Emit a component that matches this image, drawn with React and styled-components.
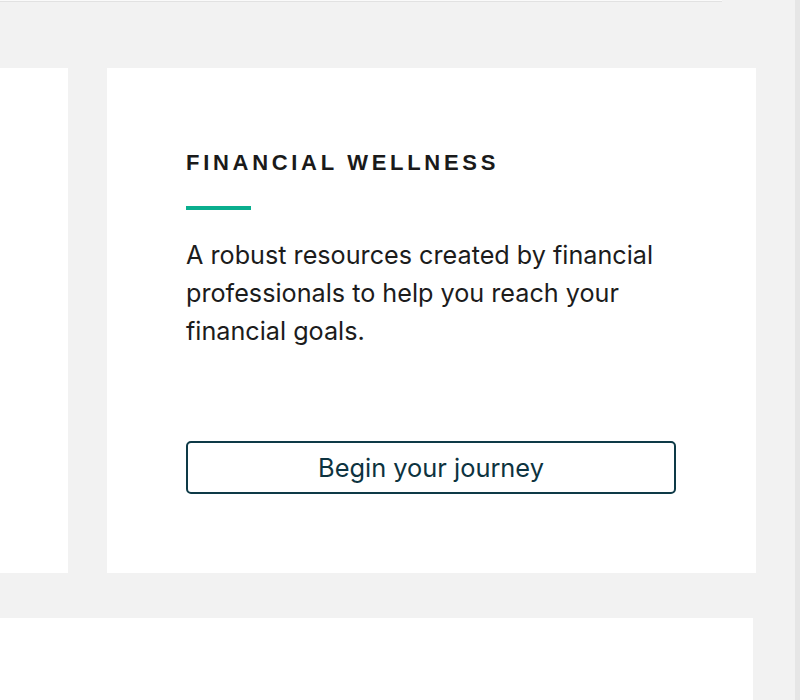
import React from "react";
import styled, { createGlobalStyle } from "styled-components";

const Global = createGlobalStyle`
  html, body { margin: 0; padding: 0; background: #f2f2f2; }
  body { font-family: "Inter", "Open Sans", sans-serif; }
  * { box-sizing: border-box; }
`;

const Page = styled.div`
  display: flex;
  width: 800px;
  height: 700px;
  overflow: hidden;
`;

const Main = styled.div`
  flex: 1;
  display: flex;
  flex-direction: column;
`;

const Track = styled.div`
  width: 5px;
  background: #e6e6e6;
`;

const PrevEdge = styled.div`
  width: 722px;
  height: 2px;
  background: #fafafa;
  border-bottom: 1px solid #e2e2e2;
`;

const Row = styled.div`
  display: flex;
  gap: 39px;
  margin-top: 66px;
  height: 505px;
`;

const Card = styled.div`
  background: #ffffff;
  width: ${(p) => p.$w}px;
  flex-shrink: 0;
`;

const FeatureCard = styled(Card)`
  padding: 83px 80px 0 79px;
  display: flex;
  flex-direction: column;
`;

const Title = styled.h2`
  margin: 0;
  font-family: "Liberation Sans", Arial, sans-serif;
  font-weight: 700;
  font-size: 22px;
  line-height: 24px;
  letter-spacing: 3.7px;
  color: #1a1a1a;
`;

const Accent = styled.div`
  width: 65px;
  height: 4px;
  background: #0aae8e;
  margin-top: 31px;
`;

const Body = styled.p`
  margin: 26px 0 0;
  font-size: 25.2px;
  line-height: 38px;
  color: #1c1c1c;
  font-weight: 400;
  letter-spacing: 0;
`;

const Button = styled.button`
  margin-top: 91px;
  height: 53px;
  width: 100%;
  background: #ffffff;
  border: 2px solid #0e3a47;
  border-radius: 5px;
  font-family: "Inter", "Open Sans", sans-serif;
  font-size: 25.4px;
  font-weight: 400;
  letter-spacing: 0;
  color: #0d3340;
  cursor: pointer;
`;

const BottomCard = styled(Card)`
  margin-top: 45px;
  height: 82px;
`;

export default function App() {
  return (
    <>
      <Global />
      <Page>
        <Main>
          <PrevEdge />
          <Row>
            <Card $w={68} />
            <FeatureCard $w={649}>
              <Title>FINANCIAL WELLNESS</Title>
              <Accent />
              <Body>
                A robust resources created by financial professionals to help
                you reach your financial goals.
              </Body>
              <Button>Begin your journey</Button>
            </FeatureCard>
          </Row>
          <BottomCard $w={753} />
        </Main>
        <Track />
      </Page>
    </>
  );
}
